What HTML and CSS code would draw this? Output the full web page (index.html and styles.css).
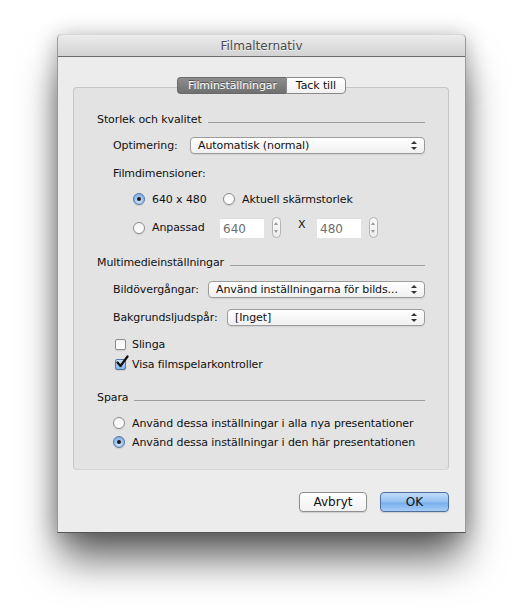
FILE: index.html
```html
<!DOCTYPE html>
<html lang="sv">
<head>
  <meta charset="UTF-8">
  <title>Filmalternativ</title>
  <link rel="stylesheet" href="styles.css">
</head>
<body>
  <div class="window">
    <div class="titlebar">Filmalternativ</div>

    <div class="window-body">
      <!-- Tabs -->
      <div class="tabs">
        <span class="tab active">Filminställningar</span>
        <span class="tab">Tack till</span>
      </div>

      <div class="tab-box">
        <!-- Storlek och kvalitet -->
        <div class="group-title first">Storlek och kvalitet</div>

        <div class="row select-row optimering">
          <span class="label">Optimering:</span>
          <div class="popup w-235">Automatisk (normal)</div>
        </div>

        <div class="row label-row">
          <span class="label">Filmdimensioner:</span>
        </div>

        <div class="row dim-row">
          <span class="option dim-first"><span class="radio checked"></span>640 x 480</span>
          <span class="option dim-second"><span class="radio"></span>Aktuell skärmstorlek</span>
        </div>

        <div class="row dim-row custom">
          <span class="option dim-first"><span class="radio"></span>Anpassad</span>
          <span class="num-field">640</span>
          <span class="stepper"></span>
          <span class="times">X</span>
          <span class="num-field">480</span>
          <span class="stepper"></span>
        </div>

        <!-- Multimedieinställningar -->
        <div class="group-title second">Multimedieinställningar</div>

        <div class="row select-row bild">
          <span class="label">Bildövergångar:</span>
          <div class="popup w-217">Använd inställningarna för bilds...</div>
        </div>

        <div class="row select-row bakgrund">
          <span class="label">Bakgrundsljudspår:</span>
          <div class="popup w-198">[Inget]</div>
        </div>

        <div class="row check-row slinga">
          <span class="checkbox"></span>Slinga
        </div>
        <div class="row check-row visa">
          <span class="checkbox checked">
            <svg class="tick" width="14" height="14" viewBox="0 0 14 14"><path d="M2.5 7.5 L5.5 11 L12.5 1.5" fill="none" stroke="#111" stroke-width="2.2" stroke-linecap="round" stroke-linejoin="round"/></svg>
          </span>Visa filmspelarkontroller
        </div>

        <!-- Spara -->
        <div class="group-title third">Spara</div>

        <div class="row save-row first-save">
          <span class="radio"></span>Använd dessa inställningar i alla nya presentationer
        </div>
        <div class="row save-row second-save">
          <span class="radio checked"></span>Använd dessa inställningar i den här presentationen
        </div>
      </div>

      <!-- Dialog buttons -->
      <div class="buttons">
        <button class="btn">Avbryt</button>
        <button class="btn default">OK</button>
      </div>
    </div>
  </div>
</body>
</html>
```

FILE: styles.css
```css
/* General */
html {
  background: #ffffff;
}

body {
  margin: 0;
  min-height: 610px;
  box-sizing: border-box;
  padding: 35px 0 0 57px;
  background: #ffffff;
  font-family: 'DejaVu Sans', 'Liberation Sans', sans-serif;
  font-size: 11px;
  letter-spacing: -0.1px;
  color: #111111;
}

/* Window frame */
.window {
  width: 407px;
  background: #ececec;
  border: 1px solid #9a9a9a;
  border-top: none;
  border-bottom-color: #555555;
  border-radius: 5px 5px 0 0;
  box-shadow: 0 30px 40px -4px rgba(0, 0, 0, 0.6), 0 2px 22px rgba(0, 0, 0, 0.28);
}

.titlebar {
  height: 21px;
  line-height: 22px;
  text-align: center;
  font-size: 12px;
  letter-spacing: 0;
  color: #4a4a4a;
  background: linear-gradient(#ececec, #d2d2d2);
  border-bottom: 1px solid #6a6a6a;
  border-top: 1px solid #d8d8d8;
  margin-top: -1px;
  border-radius: 5px 5px 0 0;
  text-shadow: 0 1px 0 rgba(255, 255, 255, 0.6);
}

.window-body {
  padding: 20px 16px 20px 15px;
}

/* Tabs */
.tabs {
  display: flex;
  justify-content: center;
  position: relative;
  z-index: 1;
  height: 17px;
  margin-left: 1px;
}

.tab {
  height: 15px;
  line-height: 15px;
  padding: 0 9px;
  border: 1px solid #8a8a8a;
  background: linear-gradient(#ffffff, #f1f1f1);
  color: #111111;
}

.tab:first-child {
  border-radius: 4px 0 0 4px;
  border-right: none;
}

.tab:last-child {
  border-radius: 0 4px 4px 0;
}

.tab.active {
  background: linear-gradient(#8e8e8e, #6f6f6f);
  border-color: #6a6a6a;
  color: #ffffff;
  text-shadow: 0 -1px 0 rgba(0, 0, 0, 0.45);
  padding: 0 9px 0 10px;
}

.tab-box {
  margin-top: -7px;
  border: 1px solid #c6c6c6;
  border-bottom-color: #d4d4d4;
  border-radius: 4px;
  background: #e3e3e3;
  padding: 0 23px 19px 23px;
}

/* Rows */
.row {
  display: flex;
  align-items: center;
  height: 16px;
}

.group-title {
  display: flex;
  align-items: center;
  height: 16px;
}

.group-title::after {
  content: '';
  flex: 1;
  height: 1px;
  background: #9e9e9e;
  margin: 7px 0 0 6px;
}

.group-title.first { margin-top: 23px; }
.group-title.second { margin-top: 16px; }
.group-title.third { margin-top: 17px; }

.select-row {
  height: 17px;
  justify-content: space-between;
  padding-left: 16px;
}

.optimering { margin-top: 10px; }
.bild { margin-top: 11px; }
.bakgrund { margin-top: 11px; }

.label-row {
  padding-left: 16px;
  margin-top: 11px;
}

/* Popup buttons */
.popup {
  position: relative;
  box-sizing: border-box;
  height: 17px;
  line-height: 15px;
  padding-left: 7px;
  border: 1px solid #9c9c9c;
  border-radius: 4px;
  background: linear-gradient(#ffffff, #f0f0f0);
  box-shadow: 0 1px 1px rgba(0, 0, 0, 0.08);
}

.w-235 { width: 235px; }
.w-217 { width: 217px; }
.w-198 { width: 198px; }

.popup::before,
.popup::after {
  content: '';
  position: absolute;
  right: 7px;
  width: 0;
  height: 0;
  border-left: 3px solid transparent;
  border-right: 3px solid transparent;
}

.popup::before {
  top: 3px;
  border-bottom: 3px solid #333333;
}

.popup::after {
  top: 9px;
  border-top: 3px solid #333333;
}

/* Radios and checkboxes */
.radio {
  box-sizing: border-box;
  display: inline-block;
  position: relative;
  width: 12px;
  height: 12px;
  border-radius: 50%;
  border: 1px solid #8c8c8c;
  background: linear-gradient(#f4f4f4, #ffffff);
  box-shadow: 0 1px 1px rgba(0, 0, 0, 0.1);
  margin-right: 7px;
  flex-shrink: 0;
}

.radio.checked {
  border-color: #5677a6;
  background: radial-gradient(circle at 50% 70%, #d7e9fb 0%, #9dc4f0 45%, #6ea2e2 100%);
}

.radio.checked::after {
  content: '';
  position: absolute;
  left: 3px;
  top: 3px;
  width: 4px;
  height: 4px;
  border-radius: 50%;
  background: #1a1a1a;
}

.dim-row {
  padding-left: 36px;
  margin-top: 10px;
}

.dim-first {
  display: flex;
  align-items: center;
  width: 87px;
}

.dim-second {
  display: flex;
  align-items: center;
  margin-left: 3px;
}

.dim-row.custom {
  height: 21px;
}

.num-field {
  box-sizing: border-box;
  width: 44px;
  height: 20px;
  line-height: 21px;
  padding-left: 3px;
  background: #ffffff;
  border-top: 1px solid #dcdcdc;
  font-size: 12px;
  letter-spacing: 0;
  color: #6e6e6e;
}

.stepper {
  position: relative;
  box-sizing: border-box;
  width: 9px;
  height: 21px;
  margin-left: 8px;
  border: 1px solid #b4b4b4;
  border-radius: 5px;
  background: linear-gradient(#fbfbfb, #eeeeee);
}

.stepper::before,
.stepper::after {
  content: '';
  position: absolute;
  left: 1px;
  width: 0;
  height: 0;
  border-left: 2.5px solid transparent;
  border-right: 2.5px solid transparent;
}

.stepper::before {
  top: 4px;
  border-bottom: 3px solid #9a9a9a;
}

.stepper::after {
  bottom: 4px;
  border-top: 3px solid #9a9a9a;
}

.times {
  margin: -6px 12px 0 17px;
  width: 7px;
}

.check-row {
  padding-left: 18px;
}

.slinga { margin-top: 10px; }
.visa { margin-top: 4px; }

.checkbox {
  box-sizing: border-box;
  position: relative;
  display: inline-block;
  width: 11px;
  height: 11px;
  border: 1px solid #8c8c8c;
  border-radius: 2px;
  background: linear-gradient(#f3f3f3, #ffffff);
  box-shadow: 0 1px 1px rgba(0, 0, 0, 0.1);
  margin-right: 6px;
}

.checkbox.checked {
  border-color: #5677a6;
  background: linear-gradient(#cfe3f8, #80b2ea);
}

.tick {
  position: absolute;
  left: -1px;
  top: -5px;
}

.save-row {
  padding-left: 16px;
}

.first-save { margin-top: 10px; }
.second-save { margin-top: 3px; }

/* Buttons */
.buttons {
  display: flex;
  justify-content: flex-end;
  gap: 13px;
  margin-top: 22px;
}

.btn {
  box-sizing: border-box;
  height: 20px;
  width: 68px;
  padding: 0;
  font-family: 'DejaVu Sans', 'Liberation Sans', sans-serif;
  font-size: 12px;
  color: #111111;
  border: 1px solid #8e8e8e;
  border-radius: 4px;
  background: linear-gradient(#ffffff, #f1f1f1);
  box-shadow: 0 1px 1px rgba(0, 0, 0, 0.12);
}

.btn.default {
  width: 69px;
  border-color: #4f6f9f;
  background: linear-gradient(#c2dcf8 0%, #93c0f1 50%, #78aeee 55%, #a5cdf7 100%);
}
```
